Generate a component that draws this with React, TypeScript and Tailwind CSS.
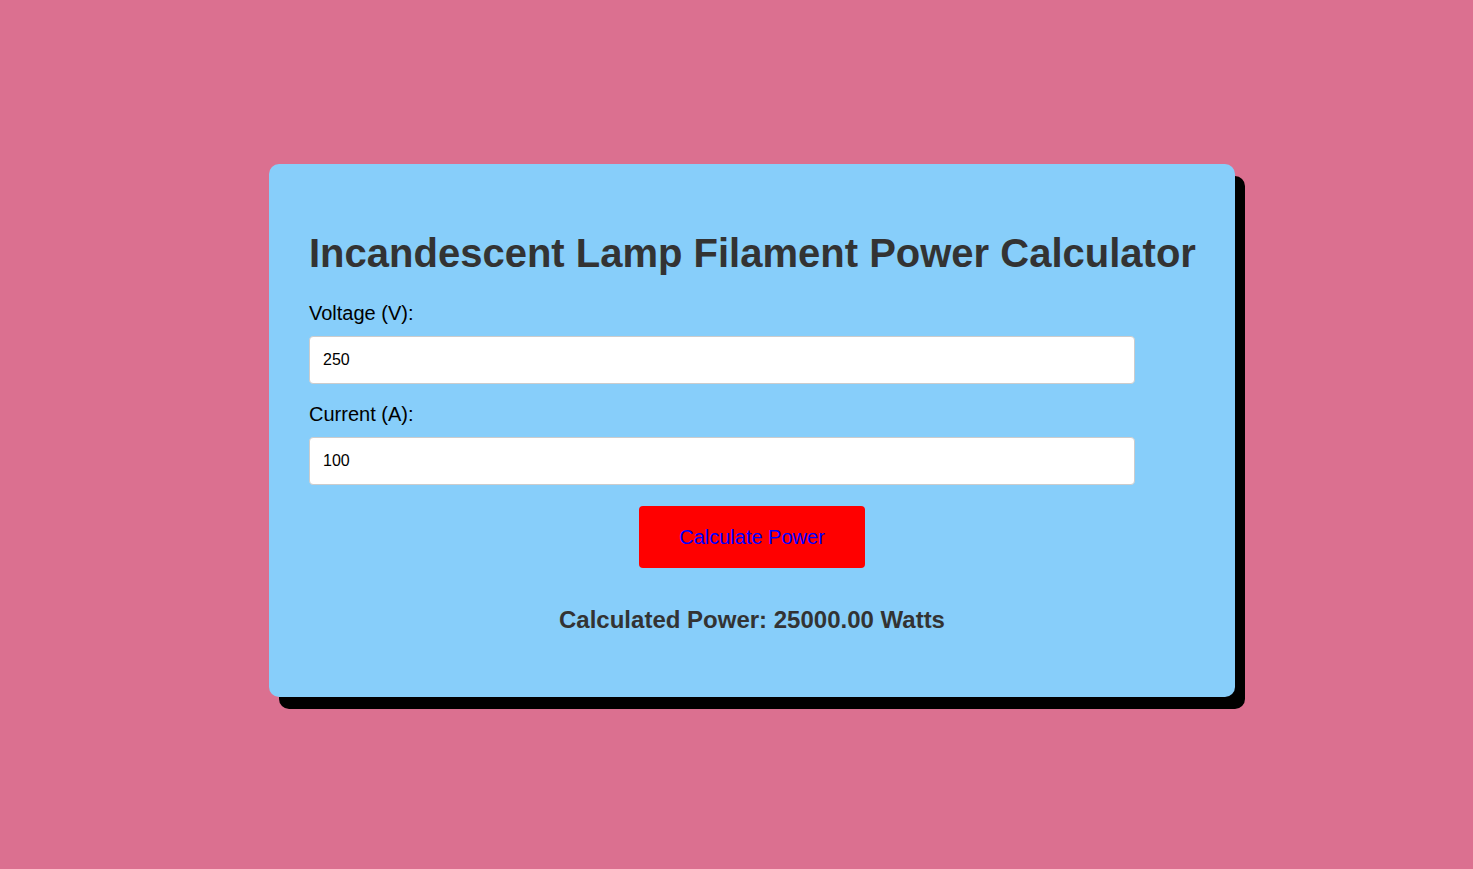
import React, { useState } from 'react';

const font = { fontFamily: '"Liberation Sans", Arial, sans-serif' };

export default function App() {
  const [voltage, setVoltage] = useState('250');
  const [current, setCurrent] = useState('100');
  const [power, setPower] = useState<number | null>(25000);

  const calculate = () => {
    const v = parseFloat(voltage);
    const i = parseFloat(current);
    if (!isNaN(v) && !isNaN(i)) setPower(v * i);
  };

  return (
    <div className="min-h-screen bg-[#db7090] pt-[164px] pl-[269px]" style={font}>
      <div className="w-[966px] h-[533px] rounded-[10px] bg-[#87cefa] p-10 shadow-[10px_12px_0_0_#000]">
        <h1 className="mt-[26px] whitespace-nowrap text-[40px] leading-[46px] font-bold text-[#333]">
          Incandescent Lamp Filament Power Calculator
        </h1>

        <label className="block mt-[26px] mb-[11px] text-[20px] leading-[23px] text-black">
          Voltage (V):
        </label>
        <input
          type="number"
          value={voltage}
          onChange={(e) => setVoltage(e.target.value)}
          className="block w-[826px] h-[48px] px-[13px] rounded-[4px] border border-[#ccc] bg-white text-[16px] text-black outline-none"
        />

        <label className="block mt-[19px] mb-[11px] text-[20px] leading-[23px] text-black">
          Current (A):
        </label>
        <input
          type="number"
          value={current}
          onChange={(e) => setCurrent(e.target.value)}
          className="block w-[826px] h-[48px] px-[13px] rounded-[4px] border border-[#ccc] bg-white text-[16px] text-black outline-none"
        />

        <div className="flex justify-center mt-[21px]">
          <button
            onClick={calculate}
            className="w-[226px] h-[62px] rounded-[4px] bg-[#ff0000] text-[20px] text-[#0000ff]"
          >
            Calculate Power
          </button>
        </div>

        {power !== null && (
          <p className="mt-[38px] text-center text-[24px] leading-[28px] font-bold text-[#333]">
            Calculated Power: {power.toFixed(2)} Watts
          </p>
        )}
      </div>
    </div>
  );
}
